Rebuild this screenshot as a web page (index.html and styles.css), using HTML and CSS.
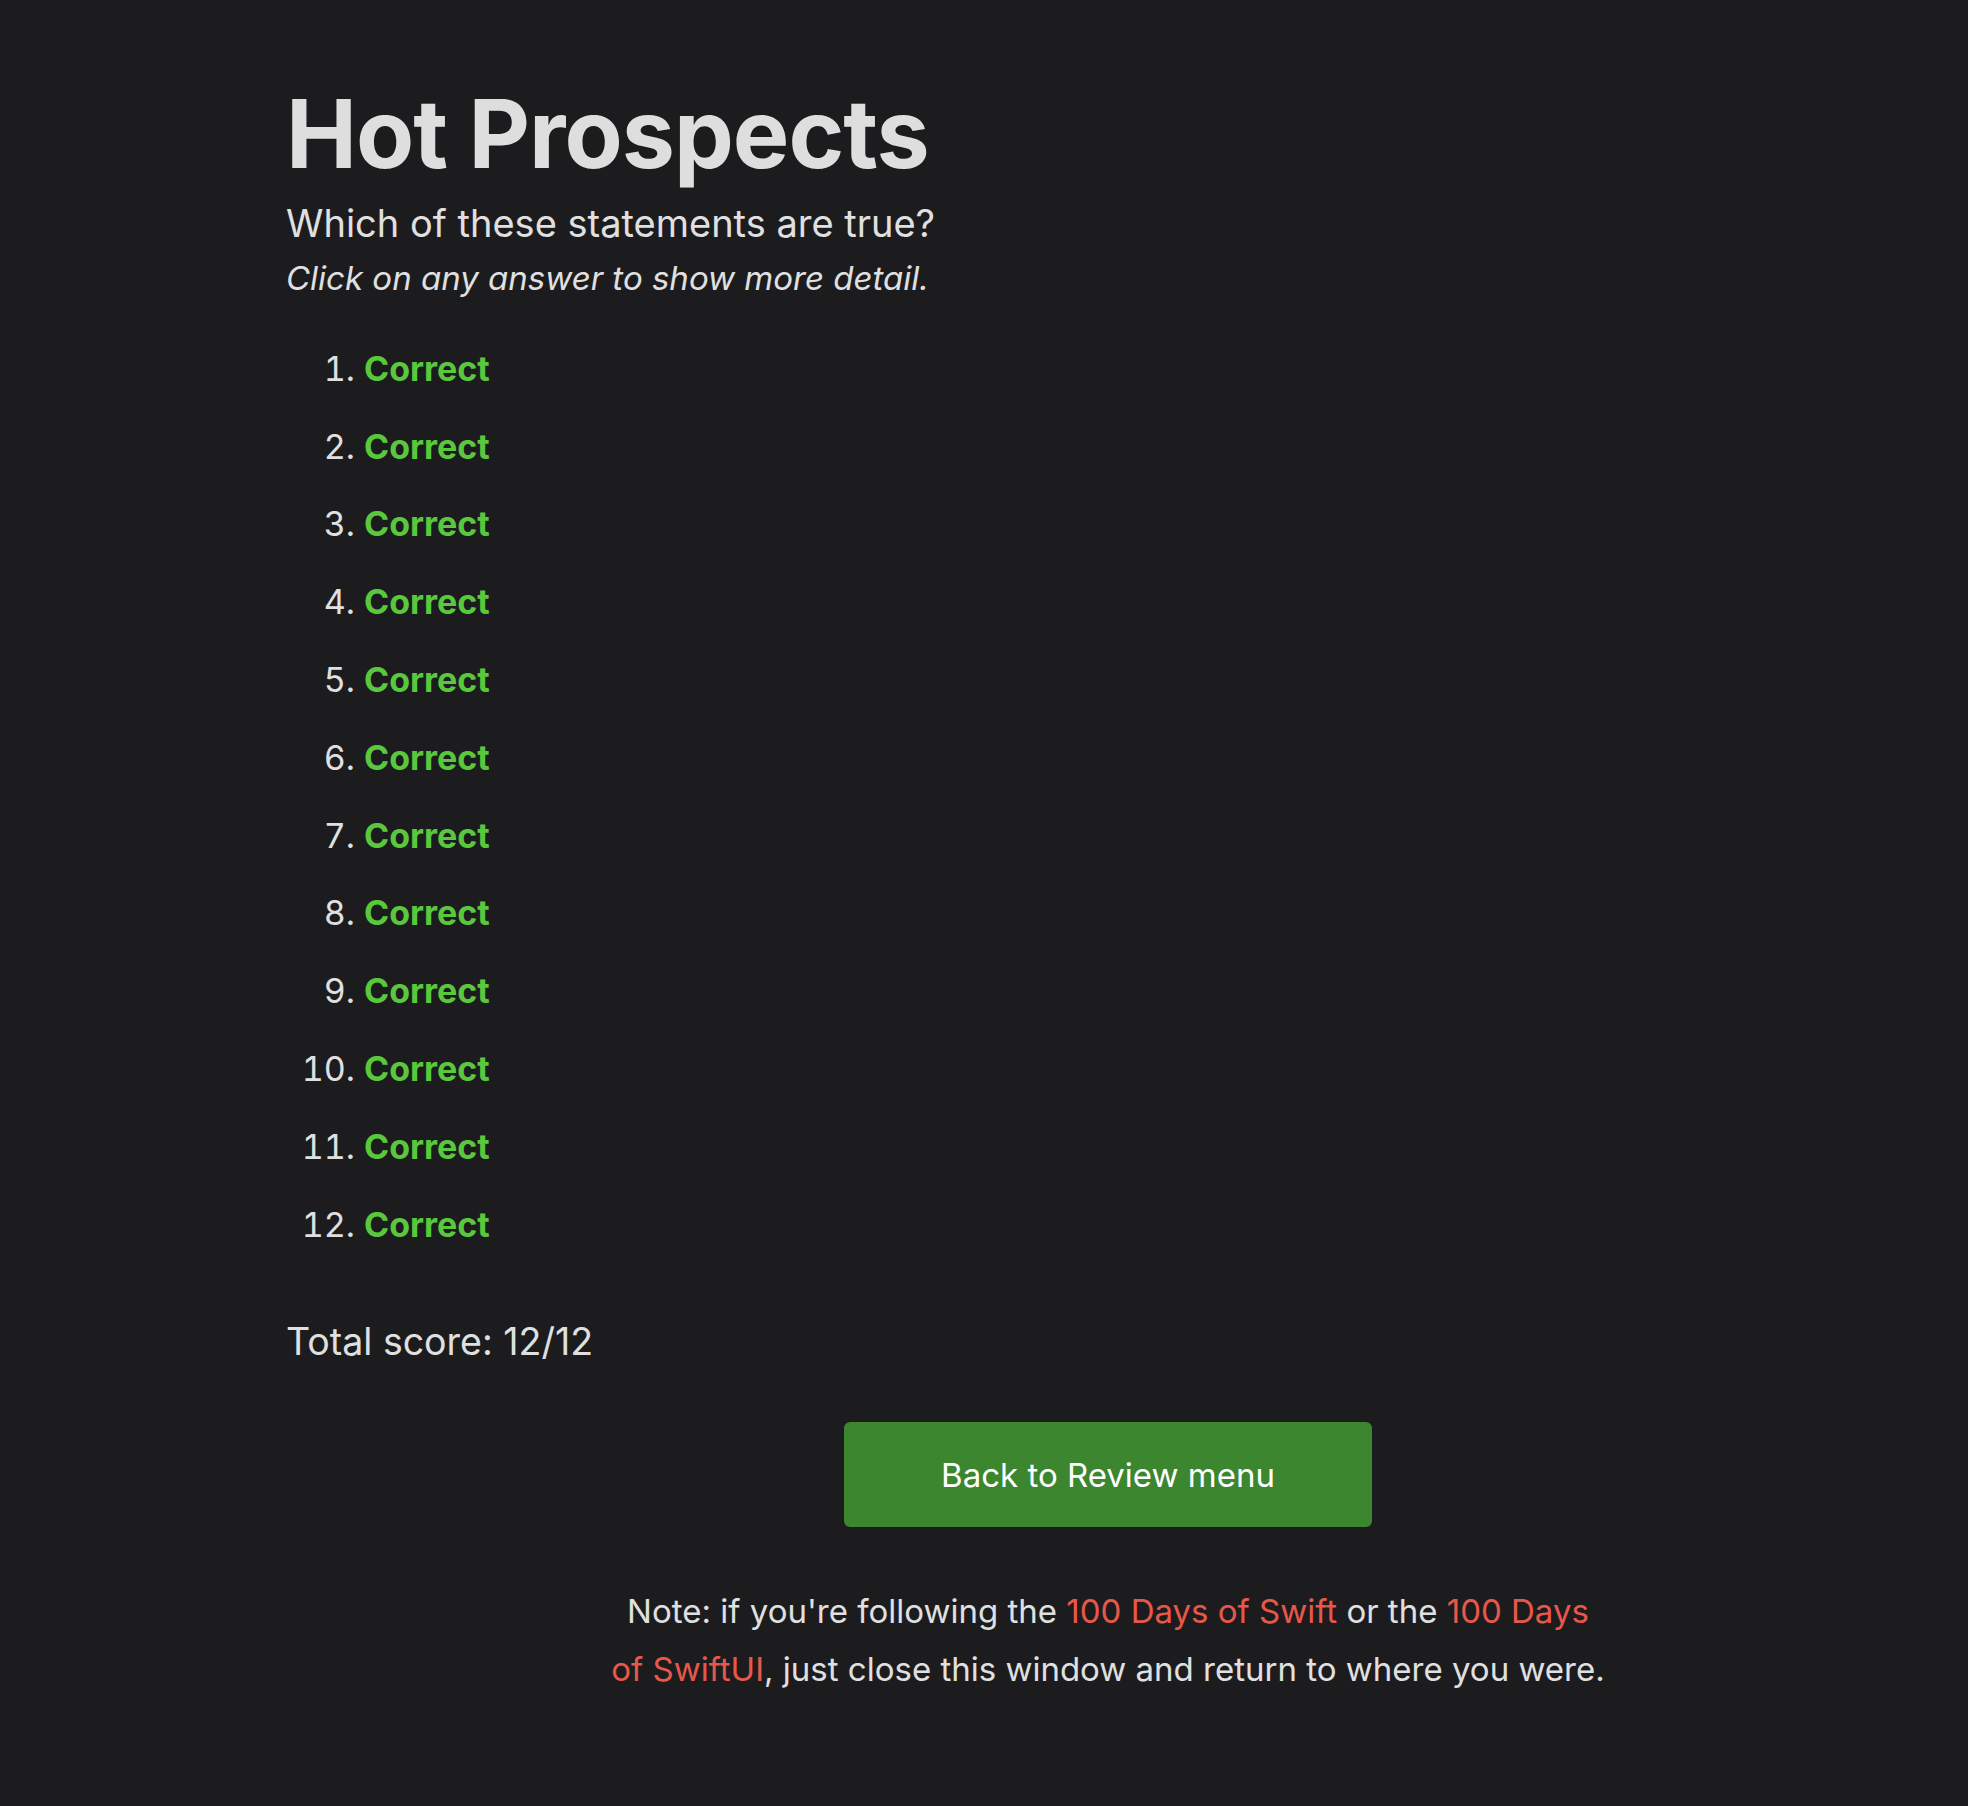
FILE: index.html
```html
<!DOCTYPE html>
<html lang="en">
<head>
<meta charset="utf-8">
<title>Hot Prospects</title>
<link rel="stylesheet" href="styles.css">
</head>
<body>
<main class="page">
  <h1 class="title">Hot Prospects</h1>
  <p class="subtitle">Which of these statements are true?</p>
  <p class="hint">Click on any answer to show more detail.</p>
  <ol class="answers">
    <li><span class="correct">Correct</span></li>
    <li><span class="correct">Correct</span></li>
    <li><span class="correct">Correct</span></li>
    <li><span class="correct">Correct</span></li>
    <li><span class="correct">Correct</span></li>
    <li><span class="correct">Correct</span></li>
    <li><span class="correct">Correct</span></li>
    <li><span class="correct">Correct</span></li>
    <li><span class="correct">Correct</span></li>
    <li><span class="correct">Correct</span></li>
    <li><span class="correct">Correct</span></li>
    <li><span class="correct">Correct</span></li>
  </ol>
  <p class="score">Total score: 12/12</p>
  <div class="actions">
    <a class="back-button" href="#">Back to Review menu</a>
  </div>
  <p class="note">Note: if you're following the <a class="link" href="#">100 Days of Swift</a> or the <a class="link" href="#">100 Days of SwiftUI</a>, just close this window and return to where you were.</p>
</main>
</body>
</html>
```

FILE: styles.css
```css
html, body {
  margin: 0;
  padding: 0;
  background: #1c1c1e;
}

body {
  color: #e0e0e0;
  font-family: Inter, "Noto Sans", "Liberation Sans", sans-serif;
}

.page {
  padding: 82px 38px 80px 286px;
}

.title {
  margin: 0;
  font-size: 95px;
  font-weight: 700;
  line-height: 1.1;
  letter-spacing: -1px;
  color: #dedede;
}

.subtitle {
  margin: 10px 0 0;
  font-size: 38px;
  line-height: 1.4;
  font-weight: 400;
}

.hint {
  margin: 5px 0 0;
  font-size: 33px;
  font-style: italic;
  line-height: 1.4;
}

.answers {
  margin: 43px 0 0;
  padding-left: 78px;
  list-style: decimal;
}

.answers li {
  font-size: 34px;
  line-height: 50px;
  margin-bottom: 27.8px;
}

.correct {
  color: #5ac83c;
  font-weight: 700;
}

.score {
  margin: 66px 0 0;
  font-size: 37.5px;
  line-height: 1.4;
}

.actions {
  display: flex;
  justify-content: center;
  margin-top: 54px;
}

.back-button {
  display: flex;
  align-items: center;
  justify-content: center;
  width: 528px;
  height: 105px;
  background: #3b862f;
  color: #ffffff;
  border-radius: 6px;
  font-size: 33px;
  text-decoration: none;
}

.note {
  max-width: 996px;
  margin: 55px auto 0;
  text-align: center;
  font-size: 33px;
  line-height: 58px;
}

.link {
  color: #e8584a;
  text-decoration: none;
}
```
